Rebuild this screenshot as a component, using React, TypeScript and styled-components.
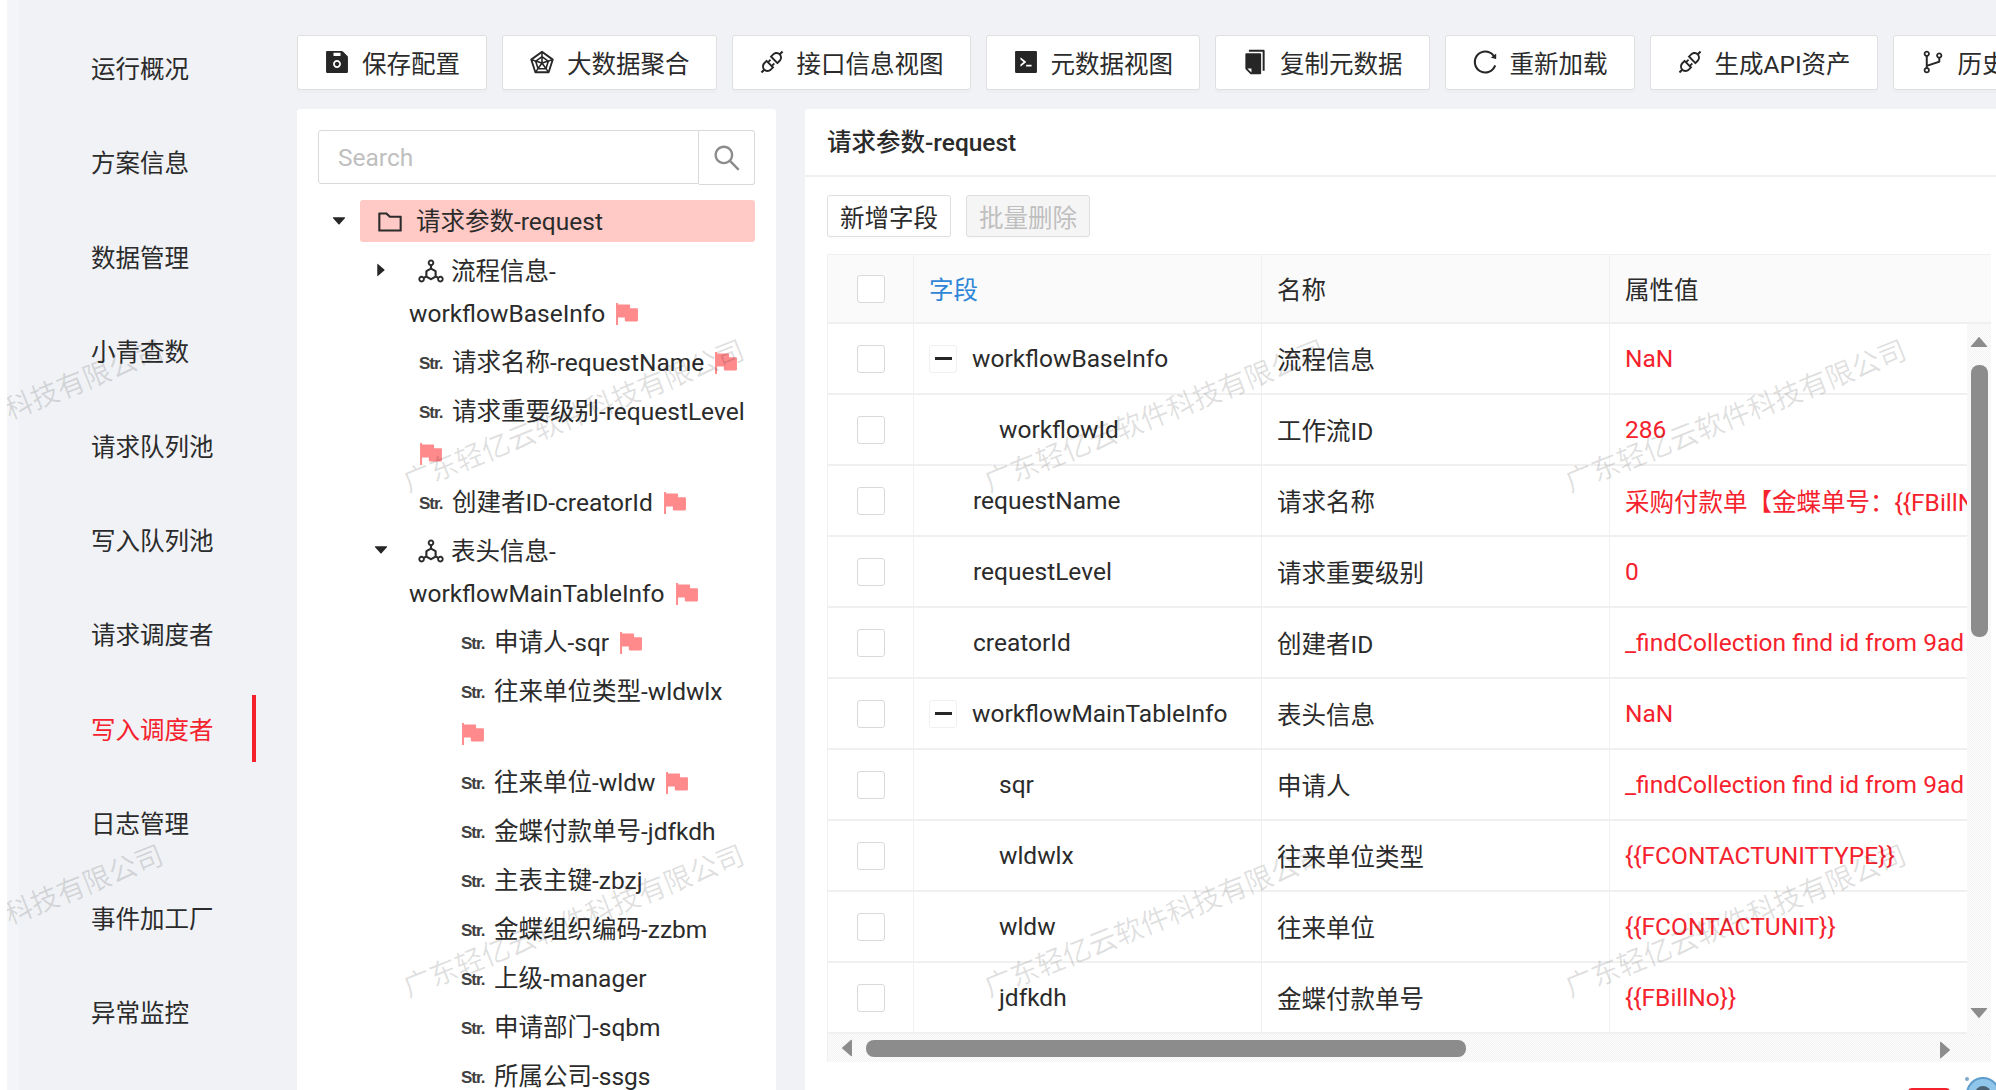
import React from "react";
import styled, { createGlobalStyle } from "styled-components";
import {
  AiFillCaretDown,
  AiFillCaretLeft,
  AiFillCaretRight,
  AiFillCaretUp,
  AiFillCode,
  AiFillCopy,
  AiFillFlag,
  AiFillSave,
  AiOutlineApi,
  AiOutlineBranches,
  AiOutlineDeploymentUnit,
  AiOutlineFolder,
  AiOutlineRadarChart,
  AiOutlineReload,
  AiOutlineSearch,
} from "react-icons/ai";

const RED = "#f5222d";
const TEXT = "#2b2b2b";
const DITHER = "repeating-conic-gradient(#f3f3f3 0 25%, #fdfdfd 0 50%) 0 0 / 2px 2px";

const GlobalStyle = createGlobalStyle`
  html, body {
    margin: 0;
    height: 100%;
    overflow: hidden;
    background: #f0f2f6;
  }
  body, button, input {
    font-family: Roboto, "Noto Sans CJK SC", sans-serif;
    font-size: 24.5px;
    color: ${TEXT};
  }
`;

const NAV_ITEMS = [
  "运行概况",
  "方案信息",
  "数据管理",
  "小青查数",
  "请求队列池",
  "写入队列池",
  "请求调度者",
  "写入调度者",
  "日志管理",
  "事件加工厂",
  "异常监控",
];

const TOOLBAR_ITEMS = [
  { label: "保存配置", icon: <AiFillSave /> },
  { label: "大数据聚合", icon: <AiOutlineRadarChart /> },
  { label: "接口信息视图", icon: <AiOutlineApi /> },
  { label: "元数据视图", icon: <AiFillCode /> },
  { label: "复制元数据", icon: <AiFillCopy /> },
  { label: "重新加载", icon: <AiOutlineReload /> },
  { label: "生成API资产", icon: <AiOutlineApi /> },
  { label: "历史版本", icon: <AiOutlineBranches /> },
];

type TreeItem = {
  label: string;
  level: number;
  caret?: "down" | "right";
  branch?: boolean;
  flag?: boolean;
};

const TREE_ITEMS: TreeItem[] = [
  { label: "流程信息-workflowBaseInfo", level: 1, caret: "right", branch: true, flag: true },
  { label: "请求名称-requestName", level: 1, flag: true },
  { label: "请求重要级别-requestLevel", level: 1, flag: true },
  { label: "创建者ID-creatorId", level: 1, flag: true },
  { label: "表头信息-workflowMainTableInfo", level: 1, caret: "down", branch: true, flag: true },
  { label: "申请人-sqr", level: 2, flag: true },
  { label: "往来单位类型-wldwlx", level: 2, flag: true },
  { label: "往来单位-wldw", level: 2, flag: true },
  { label: "金蝶付款单号-jdfkdh", level: 2 },
  { label: "主表主键-zbzj", level: 2 },
  { label: "金蝶组织编码-zzbm", level: 2 },
  { label: "上级-manager", level: 2 },
  { label: "申请部门-sqbm", level: 2 },
  { label: "所属公司-ssgs", level: 2 },
];

const TABLE_ROWS = [
  { field: "workflowBaseInfo", name: "流程信息", value: "NaN", expand: true },
  { field: "workflowId", name: "工作流ID", value: "286", indent: true },
  { field: "requestName", name: "请求名称", value: "采购付款单【金蝶单号：{{FBillNo}}" },
  { field: "requestLevel", name: "请求重要级别", value: "0" },
  { field: "creatorId", name: "创建者ID", value: "_findCollection find id from 9ad" },
  { field: "workflowMainTableInfo", name: "表头信息", value: "NaN", expand: true },
  { field: "sqr", name: "申请人", value: "_findCollection find id from 9ad", indent: true },
  { field: "wldwlx", name: "往来单位类型", value: "{{FCONTACTUNITTYPE}}", indent: true },
  { field: "wldw", name: "往来单位", value: "{{FCONTACTUNIT}}", indent: true },
  { field: "jdfkdh", name: "金蝶付款单号", value: "{{FBillNo}}", indent: true },
];

const App = () => {
  return (
    <>
      <GlobalStyle />
      <Page>
        <Sidebar>
          {NAV_ITEMS.map((item) => (
            <NavItem key={item} $active={item === "写入调度者"}>
              {item}
            </NavItem>
          ))}
        </Sidebar>

        <Main>
          <Toolbar>
            {TOOLBAR_ITEMS.map((item) => (
              <ToolButton key={item.label}>
                {item.icon}
                {item.label}
              </ToolButton>
            ))}
          </Toolbar>

          <Panels>
            <TreePanel>
              <SearchBox>
                <SearchInput placeholder="Search" />
                <SearchButton>
                  <AiOutlineSearch />
                </SearchButton>
              </SearchBox>

              <TreeRow $level={0}>
                <Switcher>
                  <AiFillCaretDown />
                </Switcher>
                <RootNode>
                  <AiOutlineFolder />
                  请求参数-request
                </RootNode>
              </TreeRow>

              {TREE_ITEMS.map((item) => (
                <TreeRow key={item.label} $level={item.level}>
                  <Switcher>
                    {item.caret === "down" && <AiFillCaretDown />}
                    {item.caret === "right" && <AiFillCaretRight />}
                  </Switcher>
                  <TreeLabel $branch={item.branch}>
                    {item.branch ? (
                      <BranchIcon>
                        <AiOutlineDeploymentUnit />
                      </BranchIcon>
                    ) : (
                      <StrIcon>Str.</StrIcon>
                    )}
                    {item.label}{" "}
                    {item.flag && (
                      <FlagIcon>
                        <AiFillFlag />
                      </FlagIcon>
                    )}
                  </TreeLabel>
                </TreeRow>
              ))}
            </TreePanel>

            <DetailPanel>
              <DetailTitle>请求参数-request</DetailTitle>
              <DetailBody>
                <Actions>
                  <ActionButton>新增字段</ActionButton>
                  <ActionButton $disabled>批量删除</ActionButton>
                </Actions>

                <Table>
                  <HeaderRow>
                    <CheckCell>
                      <Checkbox />
                    </CheckCell>
                    <Cell $blue $pad={15}>字段</Cell>
                    <Cell>名称</Cell>
                    <Cell>属性值</Cell>
                  </HeaderRow>

                  <TableMiddle>
                    <Rows>
                      {TABLE_ROWS.map((row) => (
                        <BodyRow key={row.field}>
                          <CheckCell>
                            <Checkbox />
                          </CheckCell>
                          <Cell $pad={row.expand ? 15 : row.indent ? 85 : 59}>
                            {row.expand && <ExpandButton />}
                            {row.field}
                          </Cell>
                          <Cell>{row.name}</Cell>
                          <Cell $red>{row.value}</Cell>
                        </BodyRow>
                      ))}
                    </Rows>
                    <VerticalBar>
                      <BarArrow>
                        <AiFillCaretUp />
                      </BarArrow>
                      <VerticalThumb />
                      <BarArrow $end>
                        <AiFillCaretDown />
                      </BarArrow>
                    </VerticalBar>
                  </TableMiddle>

                  <HorizontalBar>
                    <BarArrow>
                      <AiFillCaretLeft />
                    </BarArrow>
                    <HorizontalThumb />
                    <BarArrow $end>
                      <AiFillCaretRight />
                    </BarArrow>
                  </HorizontalBar>
                </Table>
              </DetailBody>
            </DetailPanel>
          </Panels>
        </Main>

        <HelpWidget>
          <HelpTag />
          <svg width="34" height="34" viewBox="0 0 34 34">
            <circle cx="18" cy="18" r="16" fill="#8fc6ea" stroke="#5d9ccb" strokeWidth="2" />
            <circle cx="18" cy="18" r="8" fill="#4b6274" />
            <circle cx="2" cy="3" r="2" fill="#7fa8c8" />
          </svg>
        </HelpWidget>

        <Watermarks>
          {Array.from({ length: 8 }, (_, index) => (
            <Watermark key={index}>
              <span>广东轻亿云软件科技有限公司</span>
            </Watermark>
          ))}
        </Watermarks>
      </Page>
    </>
  );
};

export default App;

const Page = styled.div`
  position: relative;
  display: flex;
  width: 1996px;
  height: 1090px;
  overflow: hidden;
  border-left: 7px solid #fff;
  box-sizing: border-box;
  background: #f0f2f6;
`;

const Sidebar = styled.nav`
  display: flex;
  flex: none;
  flex-direction: column;
  gap: 27.4px;
  box-sizing: border-box;
  width: 249px;
  padding-top: 34px;
  background: linear-gradient(90deg, #f4f5f8 0, #f4f5f8 12px, #f0f2f6 12px);
`;

const NavItem = styled.div<{ $active?: boolean }>`
  display: flex;
  flex: none;
  align-items: center;
  height: 67px;
  padding-left: 84px;
  color: ${(p) => (p.$active ? RED : TEXT)};
  border-right: 4px solid ${(p) => (p.$active ? RED : "transparent")};
`;

const Main = styled.main`
  display: flex;
  flex: 1;
  flex-direction: column;
  min-width: 0;
  padding: 35px 0 0 41px;
`;

const Toolbar = styled.div`
  display: flex;
  flex: none;
  gap: 15px;
  height: 55px;
`;

const ToolButton = styled.button`
  display: flex;
  flex: none;
  align-items: center;
  gap: 11px;
  box-sizing: border-box;
  height: 55px;
  padding: 0 26px 1px 25px;
  background: #fff;
  border: 1px solid #dfdfdf;
  border-radius: 3px;
  box-shadow: 0 3px 0 rgba(0, 0, 0, 0.015);

  svg {
    flex: none;
    width: 28px;
    height: 28px;
    color: #262626;
  }
`;

const Panels = styled.div`
  display: flex;
  flex: 1;
  gap: 29px;
  min-height: 0;
  margin-top: 19px;
`;

const TreePanel = styled.section`
  flex: none;
  box-sizing: border-box;
  width: 479px;
  padding: 21px 21px 0;
  overflow: hidden;
  background: #fff;
  border-radius: 3px 3px 0 0;
`;

const SearchBox = styled.div`
  display: flex;
  height: 55px;
  margin-bottom: 15px;
`;

const SearchInput = styled.input`
  flex: 1;
  min-width: 0;
  box-sizing: border-box;
  height: 54px;
  padding: 0 19px;
  border: 1px solid #d9d9d9;
  border-radius: 3px 0 0 3px;
  outline: none;

  &::placeholder {
    color: #bfbfbf;
  }
`;

const SearchButton = styled.button`
  display: flex;
  flex: none;
  align-items: center;
  justify-content: center;
  box-sizing: border-box;
  width: 56px;
  height: 55px;
  padding: 0;
  background: #fff;
  border: 1px solid #d9d9d9;
  border-left: 0;
  border-radius: 0 3px 3px 0;

  svg {
    width: 32px;
    height: 32px;
    color: #8c8c8c;
  }
`;

const TreeRow = styled.div<{ $level: number }>`
  display: flex;
  padding-left: ${(p) => p.$level * 42}px;
  margin-bottom: 7px;
  line-height: 42px;
`;

const Switcher = styled.span`
  display: flex;
  flex: none;
  align-items: center;
  justify-content: center;
  width: 42px;
  height: 42px;

  svg {
    width: 18px;
    height: 18px;
    color: #262626;
  }
`;

const RootNode = styled.div`
  display: flex;
  flex: 1;
  align-items: center;
  gap: 11px;
  box-sizing: border-box;
  height: 42px;
  padding: 2px 0 0 15px;
  background: #ffc9c5;
  border-radius: 3px;

  svg {
    width: 30px;
    height: 30px;
  }
`;

const TreeLabel = styled.div<{ $branch?: boolean }>`
  flex: 1;
  min-width: 0;
  padding: 2px ${(p) => (p.$branch ? 30 : 0)}px 0 ${(p) => (p.$branch ? 7 : 17)}px;
  margin-bottom: -2px;
  text-indent: ${(p) => (p.$branch ? 10 : 0)}px;
  word-spacing: 4px;
`;

const BranchIcon = styled.span`
  display: inline-block;
  width: 32px;
  margin-left: -3px;
  margin-right: 3px;
  text-indent: 0;
  vertical-align: -6px;
  line-height: 1;

  svg {
    width: 30px;
    height: 30px;
  }
`;

const StrIcon = styled.span`
  display: inline-block;
  width: 33px;
  font-family: "Liberation Sans", sans-serif;
  font-size: 17px;
  font-weight: 700;
  letter-spacing: -1px;
  line-height: 1;
  text-indent: 0;
  color: #404040;
  vertical-align: 2px;
`;

const FlagIcon = styled.span`
  display: inline-block;
  margin-left: -2px;
  line-height: 1;
  vertical-align: -6px;
  text-indent: 0;
  color: #ff8a8c;

  svg {
    width: 28px;
    height: 28px;
  }
`;

const DetailPanel = styled.section`
  display: flex;
  flex: 1;
  flex-direction: column;
  min-width: 0;
  background: #fff;
  border-radius: 3px 0 0 0;
`;

const DetailTitle = styled.h2`
  flex: none;
  box-sizing: border-box;
  height: 68px;
  margin: 0;
  padding-left: 22px;
  font-size: 24.5px;
  font-weight: 500;
  line-height: 68px;
  border-bottom: 2px solid #f0f0f0;
`;

const DetailBody = styled.div`
  padding: 18px 5px 0 22px;
`;

const Actions = styled.div`
  display: flex;
  gap: 15px;
  margin-bottom: 17px;
`;

const ActionButton = styled.button<{ $disabled?: boolean }>`
  box-sizing: border-box;
  width: 124px;
  height: 42px;
  padding: 0;
  color: ${(p) => (p.$disabled ? "#bfbfbf" : TEXT)};
  background: ${(p) => (p.$disabled ? "#f5f5f5" : "#fff")};
  border: 1px solid #dedede;
  border-radius: 3px;
  box-shadow: 0 2px 0 rgba(0, 0, 0, 0.015);
`;

const Table = styled.div`
  border-top: 1px solid #f0f0f0;
  border-left: 1px solid #f0f0f0;
`;

const HeaderRow = styled.div`
  display: grid;
  grid-template-columns: 86px 348px 348px 1fr;
  height: 67px;
  background: #fafafa;
  border-bottom: 2px solid #f0f0f0;
`;

const TableMiddle = styled.div`
  display: flex;
`;

const Rows = styled.div`
  flex: 1;
  min-width: 0;
`;

const BodyRow = styled.div`
  display: grid;
  grid-template-columns: 86px 348px 348px minmax(0, 1fr);
  box-sizing: border-box;
  height: 71px;
  border-bottom: 2px solid #f0f0f0;
`;

const CheckCell = styled.div`
  display: flex;
  align-items: center;
  justify-content: center;
  border-right: 1px solid #f0f0f0;
`;

const Checkbox = styled.span`
  box-sizing: border-box;
  width: 28px;
  height: 28px;
  background: #fff;
  border: 1px solid #d9d9d9;
  border-radius: 3px;
`;

const Cell = styled.div<{ $blue?: boolean; $red?: boolean; $pad?: number }>`
  display: flex;
  align-items: center;
  padding-left: ${(p) => p.$pad ?? 15}px;
  overflow: hidden;
  color: ${(p) => (p.$blue ? "#2f86d6" : p.$red ? RED : TEXT)};
  white-space: nowrap;
  border-right: 1px solid #f0f0f0;

  &:last-child {
    border-right: 0;
  }
`;

const ExpandButton = styled.span`
  display: flex;
  flex: none;
  align-items: center;
  justify-content: center;
  box-sizing: border-box;
  width: 28px;
  height: 28px;
  margin-right: 15px;
  background: #fff;
  border: 1px solid #f0f0f0;
  border-radius: 3px;

  &::after {
    content: "";
    width: 17px;
    height: 3px;
    background: #262626;
  }
`;

const VerticalBar = styled.div`
  display: flex;
  flex: none;
  flex-direction: column;
  align-items: center;
  box-sizing: border-box;
  width: 24px;
  padding: 6px 0 9px;
  background: ${DITHER};
`;

const VerticalThumb = styled.div`
  flex: none;
  width: 17px;
  height: 272px;
  margin-top: 11px;
  background: #8c8c8c;
  border-radius: 8px;
`;

const BarArrow = styled.span<{ $end?: boolean }>`
  display: flex;
  flex: none;
  margin-top: ${(p) => (p.$end ? "auto" : 0)};
  margin-left: ${(p) => (p.$end ? "auto" : 0)};
  color: #8c8c8c;

  svg {
    width: 24px;
    height: 24px;
  }
`;

const HorizontalBar = styled.div`
  display: flex;
  align-items: center;
  box-sizing: border-box;
  height: 28px;
  padding: 0 34px 0 7px;
  background: ${DITHER};
`;

const HorizontalThumb = styled.div`
  flex: none;
  width: 600px;
  height: 17px;
  margin-left: 7px;
  background: #8c8c8c;
  border-radius: 8px;
`;

const HelpWidget = styled.div`
  position: absolute;
  right: -3px;
  bottom: -22px;
  display: flex;
  align-items: flex-start;
  gap: 15px;
`;

const HelpTag = styled.span`
  box-sizing: border-box;
  width: 42px;
  height: 24px;
  margin-top: 12px;
  border: 2px solid ${RED};
  border-radius: 4px;
`;

const Watermarks = styled.div`
  position: absolute;
  top: 161px;
  left: -305px;
  display: grid;
  grid-template-columns: repeat(4, 581px);
  grid-template-rows: repeat(2, 505px);
  pointer-events: none;
`;

const Watermark = styled.div`
  display: flex;
  align-items: center;
  justify-content: center;
  color: rgba(0, 0, 0, 0.12);
  font-size: 28px;
  white-space: nowrap;

  span {
    transform: rotate(-21.7deg);
  }
`;
